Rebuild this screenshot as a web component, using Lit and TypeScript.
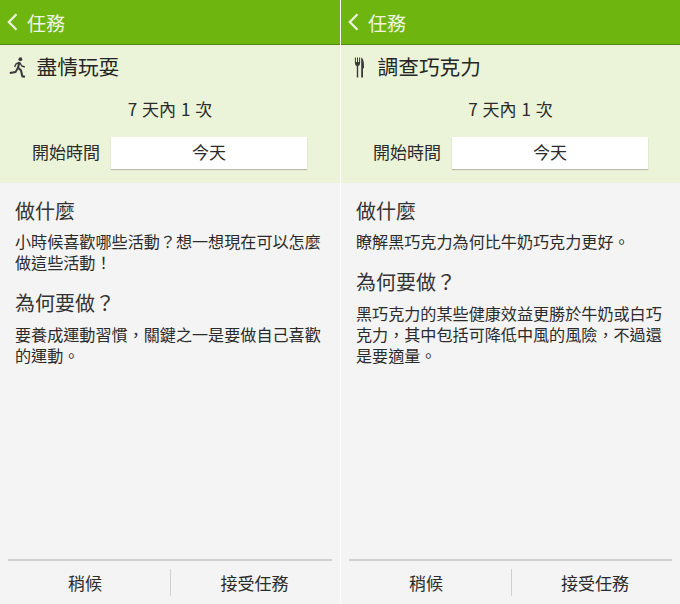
import { LitElement, html, css, svg } from "lit";
import { customElement, property } from "lit/decorators.js";

const runner = svg`<svg class="icon" width="18" height="21" viewBox="0 0 18 21">
  <circle cx="11.4" cy="2.2" r="1.9" fill="#3a3a3a"/>
  <path d="M10.6 5 L9 10.5 L12 13.5 L13.4 19.4 L16 19.8" fill="none" stroke="#3a3a3a" stroke-width="2.1" stroke-linejoin="round"/>
  <path d="M8.8 11 L6.6 15 L0.8 16" fill="none" stroke="#3a3a3a" stroke-width="1.9" stroke-linejoin="round"/>
  <path d="M10.4 5.4 L7 7 L5.6 10 M11 6 L12.8 9 L15.8 10" fill="none" stroke="#3a3a3a" stroke-width="1.4" stroke-linejoin="round"/>
</svg>`;

const cutlery = svg`<svg class="icon" width="18" height="21" viewBox="0 0 18 21">
  <path d="M5.4 0.5 V6 M7.5 0.5 V6 M9.6 0.5 V6" fill="none" stroke="#3a3a3a" stroke-width="1"/>
  <path d="M5 5 H10 V6.4 Q10 8.6 8.2 9 L8.2 20.5 H6.8 L6.8 9 Q5 8.6 5 6.4 Z" fill="#3a3a3a"/>
  <path d="M11.2 0.5 C13.4 1 14.2 6 14 11 L13 11.4 L13 20.5 H11.2 Z" fill="#3a3a3a"/>
</svg>`;

@customElement("quest-panel")
class QuestPanel extends LitElement {
  static styles = css`
    :host {
      display: flex;
      flex-direction: column;
      width: 340px;
      height: 604px;
      background: #f4f4f4;
      color: #2b2b2b;
      font-family: "Noto Sans CJK TC", "Liberation Sans", sans-serif;
    }
    .bar {
      display: flex;
      align-items: center;
      height: 45px;
      padding-left: 7px;
      box-sizing: border-box;
      background: #6fb510;
      border-bottom: 1px solid #4f8a10;
      flex-shrink: 0;
      color: #eef5e0;
      font-size: 19px;
    }
    .back {
      margin-right: 9px;
    }
    .head {
      height: 138px;
      flex-shrink: 0;
      box-sizing: border-box;
      background: #ebf4d8;
      display: flex;
      flex-direction: column;
    }
    .name {
      display: flex;
      align-items: center;
      height: 41px;
      padding-left: 9px;
      font-size: 20.7px;
      color: #262626;
    }
    .name .icon {
      margin: 3px 9.5px 0 0;
    }
    .freq {
      height: 34px;
      margin-top: 6px;
      text-align: center;
      font-size: 17px;
      line-height: 34px;
      word-spacing: 1px;
    }
    .start {
      display: flex;
      align-items: center;
      margin-top: 11px;
      padding-left: 32px;
      font-size: 17px;
    }
    .start label {
      width: 79px;
      padding-bottom: 4px;
    }
    .date {
      width: 196px;
      height: 32px;
      background: #fff;
      text-align: center;
      line-height: 30px;
      box-shadow: 0 1px 1px #b9bdaf;
    }
    .body {
      flex: 1;
      padding: 14px 15px 0;
    }
    h2 {
      margin: 0;
      font-size: 20px;
      font-weight: 400;
      line-height: 28px;
      color: #333;
    }
    p {
      margin: 6px 0 16px;
      font-size: 16.1px;
      line-height: 21px;
      color: #2b2b2b;
    }
    p.why {
      margin-top: 7px;
    }
    .actions {
      display: flex;
      align-items: center;
      height: 43px;
      margin: 0 8px;
      border-top: 2px solid #cfcfcf;
      font-size: 17px;
      flex-shrink: 0;
    }
    .actions span {
      text-align: center;
    }
    .later {
      width: 154px;
      height: 27px;
      padding-right: 8px;
      line-height: 27px;
      border-right: 1px solid #cfcfcf;
    }
    .accept {
      flex: 1;
      padding-left: 6px;
    }
  `;

  @property() heading = "";
  @property() what = "";
  @property() why = "";
  @property() kind = "run";

  render() {
    return html`
      <div class="bar">
        <svg class="back" width="11" height="18" viewBox="0 0 11 18">
          <path d="M9.5 1.2 L1.8 9 L9.5 16.8" fill="none" stroke="#eef5e0" stroke-width="2.2"/>
        </svg>
        任務
      </div>
      <div class="head">
        <div class="name">${this.kind === "run" ? runner : cutlery}${this.heading}</div>
        <div class="freq">7 天內 1 次</div>
        <div class="start"><label>開始時間</label><div class="date">今天</div></div>
      </div>
      <div class="body">
        <h2>做什麼</h2>
        <p>${this.what}</p>
        <h2>為何要做？</h2>
        <p class="why">${this.why}</p>
      </div>
      <div class="actions">
        <span class="later">稍候</span>
        <span class="accept">接受任務</span>
      </div>
    `;
  }
}

@customElement("app-root")
class AppRoot extends LitElement {
  static styles = css`
    :host {
      display: flex;
      width: 680px;
      height: 604px;
      background: #fff;
    }
    quest-panel + quest-panel {
      border-left: 1px solid #fff;
      box-sizing: border-box;
    }
  `;

  render() {
    return html`
      <quest-panel
        kind="run"
        heading="盡情玩耍"
        what="小時候喜歡哪些活動？想一想現在可以怎麼做這些活動！"
        why="要養成運動習慣，關鍵之一是要做自己喜歡的運動。"
      ></quest-panel>
      <quest-panel
        kind="food"
        heading="調查巧克力"
        what="瞭解黑巧克力為何比牛奶巧克力更好。"
        why="黑巧克力的某些健康效益更勝於牛奶或白巧克力，其中包括可降低中風的風險，不過還是要適量。"
      ></quest-panel>
    `;
  }
}
